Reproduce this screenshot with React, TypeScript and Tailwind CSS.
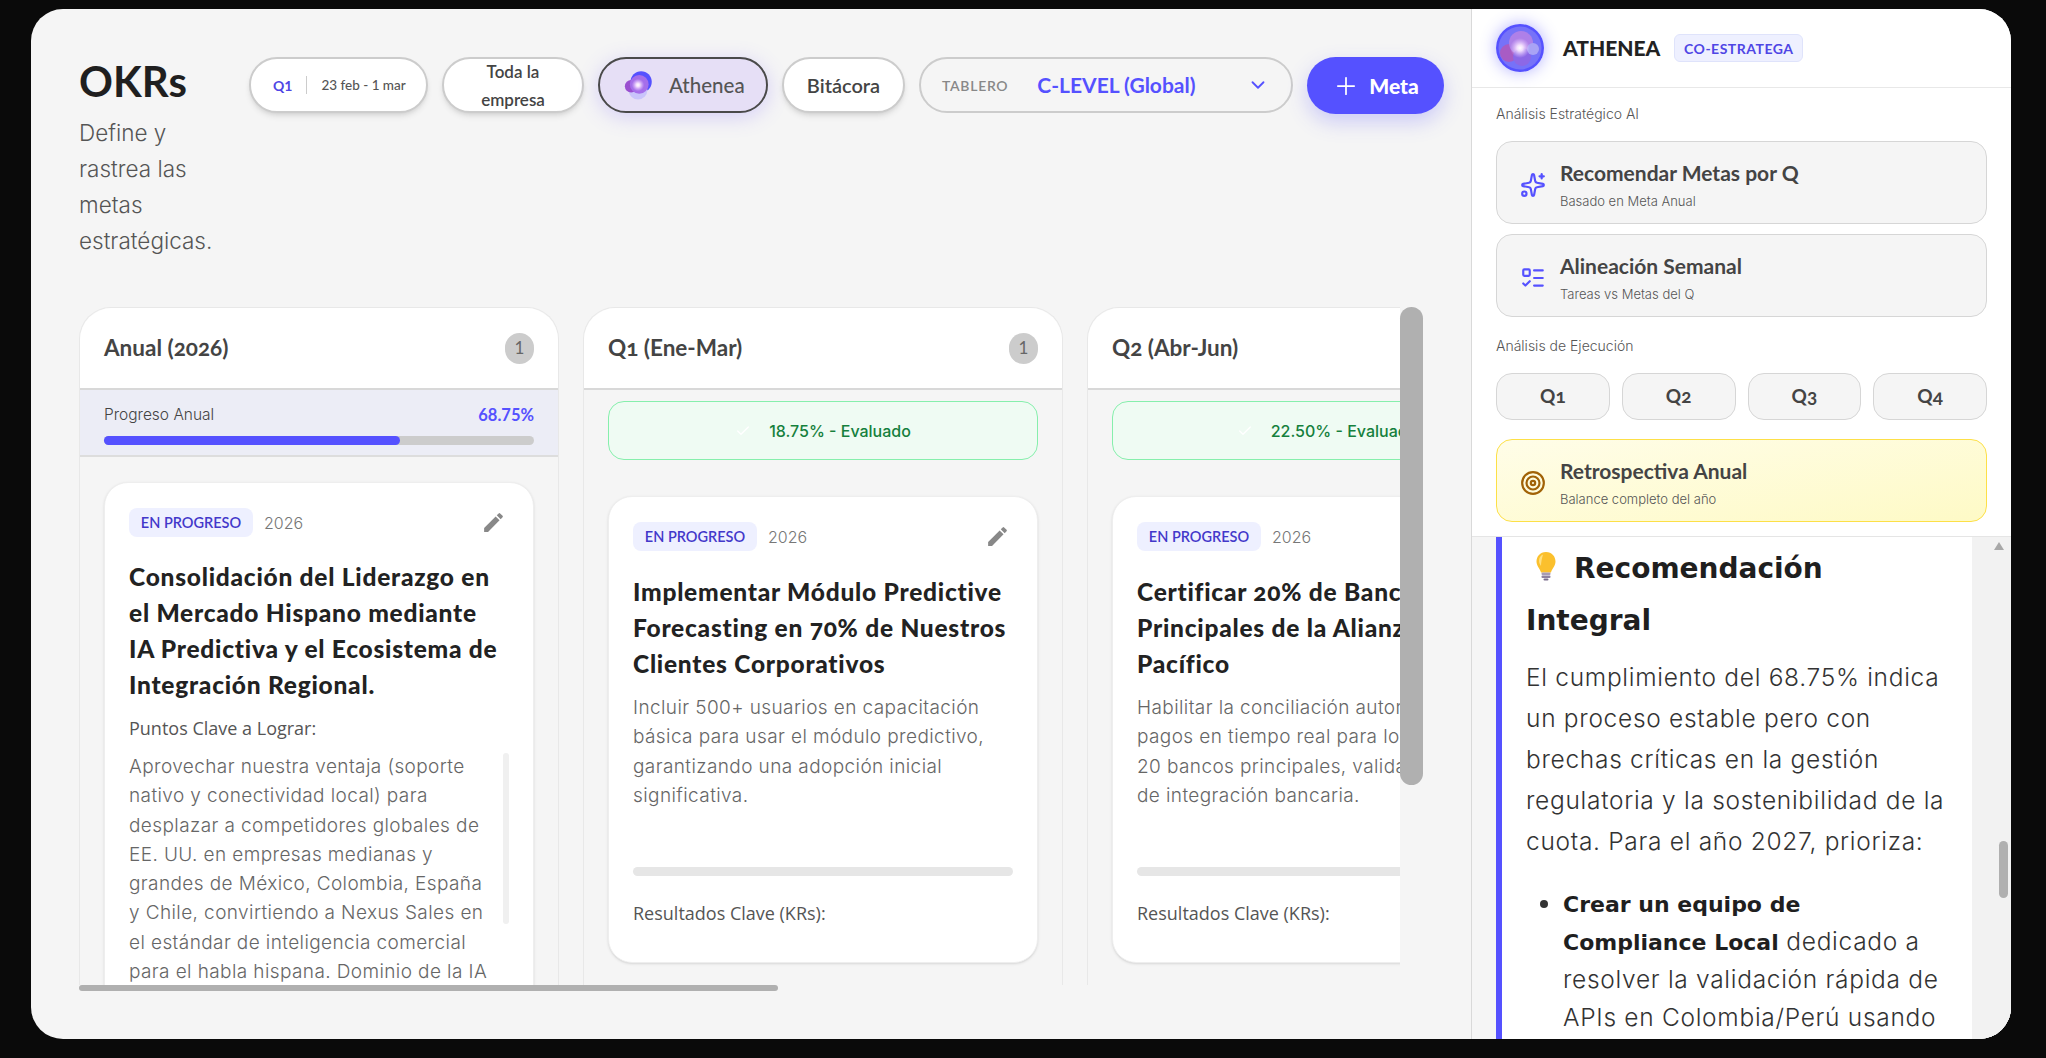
import { ChevronDown, Check, ListTodo, Plus, Sparkles, Target } from "lucide-react";
import { MdEdit } from "react-icons/md";
import type { ReactNode } from "react";

const heading = "font-['Lato'] font-bold";
const cardTitle = "font-['Lato'] font-black tracking-[0.75px]";
const body = "font-['Inter'] font-light";
const cardText = "font-['Inter'] font-light text-[19px] leading-[29.25px] tracking-[0.4px] text-[#666]";
const pillBase = "flex h-[56px] shrink-0 items-center rounded-full border-2";

const Orb = ({ id, ring }: { id: string; ring?: boolean }) => (
  <svg viewBox="0 0 48 48" className="h-full w-full">
    <defs>
      <radialGradient id={id + "-glow"}>
        <stop offset="0" stopColor="#ffffff" />
        <stop offset="0.3" stopColor="#fbeaff" stopOpacity="0.9" />
        <stop offset="1" stopColor="#e9c8ff" stopOpacity="0" />
      </radialGradient>
    </defs>
    {ring ? (
      <>
        <circle cx="24" cy="24" r="24" fill="#5551ff" />
        <circle cx="24" cy="24" r="21.500" fill="#7672f8" />
        <circle cx="13" cy="29" r="9" fill="#a85cc4" />
        <circle cx="25" cy="19" r="12" fill="#ae80e8" />
        <circle cx="26" cy="33" r="9" fill="#8c68e6" />
        <circle cx="37" cy="25" r="6" fill="#a9a3f5" />
      </>
    ) : (
      <>
        <circle cx="29" cy="19" r="17" fill="#5551ff" />
        <circle cx="24" cy="32" r="15" fill="#c9c4fb" />
        <circle cx="13" cy="26" r="10" fill="#9a4fd0" />
        <circle cx="26" cy="23" r="15" fill="#a56eea" />
      </>
    )}
    <circle cx="24" cy="24" r="10" fill={`url(#${id}-glow)`} />
  </svg>
);

const Column = ({ title, count, children }: { title: string; count?: string; children: ReactNode }) => (
  <div className="flex h-full w-[480px] shrink-0 flex-col rounded-t-[32px] border border-b-0 border-[#e8e8e8]">
    <div className="flex h-[82px] shrink-0 items-center justify-between rounded-t-[32px] border-b-2 border-[#d8d8d8] bg-white pl-6 pr-6">
      <h3 className={`${heading} text-[22.5px] text-[#444] [font-variant-numeric:oldstyle-nums]`}>{title}</h3>
      {count && (
        <span className="flex h-[31px] w-[29px] items-center justify-center rounded-full bg-[#cccccc] font-['Lato'] text-[17px] text-[#666]">{count}</span>
      )}
    </div>
    {children}
  </div>
);

const CardTop = () => (
  <div className="flex items-center">
    <span className="flex h-[29px] w-[124px] items-center justify-center rounded-lg bg-[#eef0ff] font-['Lato'] text-[14.5px] font-semibold text-[#4338ca]">EN PROGRESO</span>
    <span className={`${body} ml-[11px] text-[16px] text-[#777]`}>2026</span>
    <MdEdit size={25} className="ml-auto mr-[3px] text-[#888]" />
  </div>
);

const Evaluado = ({ text }: { text: string }) => (
  <div className="mx-6 mt-[11px] flex h-[59px] shrink-0 items-center justify-center gap-[18px] rounded-2xl border border-[#86efac] bg-[#effbf3]">
    <Check size={16} className="text-white" />
    <span className="font-['Inter'] text-[16px] font-medium text-[#15803d]">{text}</span>
  </div>
);

const QuarterCard = ({ title, desc }: { title: string[]; desc: string[] }) => (
  <div className="mx-6 mt-[36px] h-[467px] shrink-0 rounded-3xl border border-[#eeeeee] bg-white px-6 pt-[25px] shadow-sm">
    <CardTop />
    <h4 className={`${cardTitle} mt-[23px] text-[24.5px] leading-[36px] text-[#222] [font-variant-numeric:oldstyle-nums]`}>
      {title.map((l) => (
        <div key={l} className="whitespace-nowrap">{l}</div>
      ))}
    </h4>
    <div className={`${cardText} mt-[11px]`}>
      {desc.map((l) => (
        <div key={l} className="whitespace-nowrap">{l}</div>
      ))}
    </div>
    <div className="mt-[57px] h-[9px] rounded-full bg-[#e6e6e6]" />
    <p className="mt-[24px] font-['Open_Sans'] text-[18px] text-[#555]">Resultados Clave (KRs):</p>
  </div>
);

const ActionCard = ({ icon, title, sub, tone }: { icon: ReactNode; title: string; sub: string; tone?: string }) => (
  <button className={`flex h-[83px] w-full items-center rounded-2xl border pl-[23px] pt-[4px] text-left ${tone ?? "border-[#d6d6d6] bg-[#f5f5f5]"}`}>
    <span className="flex w-[26px] justify-center">{icon}</span>
    <span className="ml-[14px] block">
      <span className={`${heading} block text-[21px] leading-[28px] text-[#444]`}>{title}</span>
      <span className={`${body} mt-[4px] block text-[13px] leading-[20px] text-[#555]`}>{sub}</span>
    </span>
  </button>
);

const BulbIcon = () => (
  <svg viewBox="0 0 24 30" className="h-[30px] w-[24px]">
    <path d="M12 1C6 1 2.500 5.500 2.500 10.500c0 4.500 3.500 7 4.500 11h10c1-4 4.500-6.500 4.500-11C21.500 5.500 18 1 12 1z" fill="#fbc02d" />
    <path d="M9 3.500C6.500 4.500 5 7 5 10c0 2 1 3.500 2 5 0-4 1-8 2-11.500z" fill="#ffe082" />
    <rect x="7.500" y="21.500" width="9" height="2.500" rx="1" fill="#a79bb5" />
    <rect x="7.500" y="24.500" width="9" height="2.500" rx="1" fill="#8f82a0" />
    <rect x="9.500" y="27.500" width="5" height="2" rx="1" fill="#7a6d8c" />
  </svg>
);

export default function App() {
  return (
    <div className="h-screen w-screen overflow-hidden bg-[#0a0a0a] pl-[31px] pt-[9px]">
      <div className="flex h-[1030px] w-[1980px] overflow-hidden rounded-[32px] bg-[#f5f5f5]">
        {/* tablero */}
        <main className="w-[1440px] shrink-0 pl-[48px] pt-[48px]">
          <header className="flex h-[250px] items-start">
            <div className="w-[170px] shrink-0">
              <h1 className={`${heading} text-[42px] leading-[48px] text-[#1f1f1f]`}>OKRs</h1>
              <p className={`${body} mt-[10px] w-[150px] text-[22.5px] leading-[36px] text-[#555]`}>Define y rastrea las metas estratégicas.</p>
            </div>
            <div className="flex items-start gap-[14px]">
              <div className={`${pillBase} w-[179px] border-[#cccccc] bg-white pl-[22px] shadow-md`}>
                <span className="font-['Lato'] text-[14px] font-bold text-[#4f46e5]">Q1</span>
                <span className="mx-[14px] h-[18px] w-px bg-[#ccc]" />
                <span className="whitespace-nowrap font-['Lato'] text-[13.5px] font-medium text-[#555]">23 feb - 1 mar</span>
              </div>
              <div className={`${pillBase} w-[142px] justify-center border-[#cccccc] bg-white pt-[2px] text-center font-['Lato'] text-[17px] font-semibold leading-[28px] text-[#444] shadow-md`}>
                Toda la<br />empresa
              </div>
              <div className={`${pillBase} w-[170px] border-[#4a4a4a] bg-[#e6dff6] pl-[23px] shadow-[0_4px_20px_rgba(120,90,255,0.25)]`}>
                <span className="h-[30px] w-[30px]"><Orb id="orb-pill" /></span>
                <span className="ml-[16px] font-['Lato'] text-[20.5px] font-medium text-[#555]">Athenea</span>
              </div>
              <div className={`${pillBase} w-[123px] justify-center border-[#cccccc] bg-white font-['Lato'] text-[20px] font-semibold text-[#444] shadow-md`}>
                Bitácora
              </div>
              <div className={`${pillBase} w-[374px] border-[#cccccc] pl-[21px]`}>
                <span className="font-['Lato'] text-[14px] font-semibold tracking-wider text-[#888]">TABLERO</span>
                <span className={`${heading} ml-[29px] text-[21px] text-[#5551ff]`}>C-LEVEL (Global)</span>
                <ChevronDown size={22} className="ml-auto mr-[22px] text-[#5551ff]" />
              </div>
              <button className="flex h-[57px] w-[137px] shrink-0 items-center justify-center gap-[9px] rounded-full bg-[#5551ff] shadow-[0_8px_20px_rgba(85,81,255,0.25)]">
                <Plus size={28} strokeWidth={1.500} className="text-white" />
                <span className="font-['Lato'] text-[21px] font-black text-white">Meta</span>
              </button>
            </div>
          </header>

          <div className="relative h-[684px] w-[1344px]">
            <div className="flex h-[678px] w-[1321px] gap-6 overflow-hidden">
              <Column title="Anual (2026)" count="1">
                <div className="h-[67px] shrink-0 border-b-2 border-[#dddddd] bg-[#ecedf6] px-6 pt-[13px]">
                  <div className="flex items-center justify-between">
                    <span className={`${body} text-[15.5px] leading-[24px] text-[#444]`}>Progreso Anual</span>
                    <span className="font-['Lato'] text-[16.5px] font-bold leading-[24px] text-[#5551ff]">68.75%</span>
                  </div>
                  <div className="mt-[9px] h-[9px] rounded-full bg-[#cccccc]">
                    <div className="h-full rounded-full bg-[#5551ff]" style={{ width: "68.75%" }} />
                  </div>
                </div>
                <div className="relative mx-6 mt-[25px] h-[600px] shrink-0 rounded-3xl border border-[#eeeeee] bg-white px-6 pt-[25px] shadow-sm">
                  <CardTop />
                  <h4 className={`${cardTitle} mt-[22px] text-[24.5px] leading-[36px] text-[#222]`}>
                    <div className="whitespace-nowrap">Consolidación del Liderazgo en</div>
                    <div className="whitespace-nowrap">el Mercado Hispano mediante</div>
                    <div className="whitespace-nowrap">IA Predictiva y el Ecosistema de</div>
                    <div className="whitespace-nowrap">Integración Regional.</div>
                  </h4>
                  <p className="mt-[13px] font-['Open_Sans'] text-[18px] leading-[24px] text-[#555]">Puntos Clave a Lograr:</p>
                  <div className={`${cardText} mt-[12px]`}>
                    <div className="whitespace-nowrap">Aprovechar nuestra ventaja (soporte</div>
                    <div className="whitespace-nowrap">nativo y conectividad local) para</div>
                    <div className="whitespace-nowrap">desplazar a competidores globales de</div>
                    <div className="whitespace-nowrap">EE. UU. en empresas medianas y</div>
                    <div className="whitespace-nowrap">grandes de México, Colombia, España</div>
                    <div className="whitespace-nowrap">y Chile, convirtiendo a Nexus Sales en</div>
                    <div className="whitespace-nowrap">el estándar de inteligencia comercial</div>
                    <div className="whitespace-nowrap">para el habla hispana. Dominio de la IA</div>
                  </div>
                  <div className="absolute left-[398px] top-[270px] h-[171px] w-[6px] rounded-full bg-[#f0f0f0]" />
                </div>
              </Column>
              <Column title="Q1 (Ene-Mar)" count="1">
                <Evaluado text="18.75% - Evaluado" />
                <QuarterCard
                  title={["Implementar Módulo Predictive", "Forecasting en 70% de Nuestros", "Clientes Corporativos"]}
                  desc={["Incluir 500+ usuarios en capacitación", "básica para usar el módulo predictivo,", "garantizando una adopción inicial", "significativa."]}
                />
              </Column>
              <Column title="Q2 (Abr-Jun)">
                <Evaluado text="22.50% - Evaluado" />
                <QuarterCard
                  title={["Certificar 20% de Bancos", "Principales de la Alianza del", "Pacífico"]}
                  desc={["Habilitar la conciliación automática de", "pagos en tiempo real para los", "20 bancos principales, validando APIs", "de integración bancaria."]}
                />
              </Column>
            </div>
            {/* barras de scroll */}
            <div className="absolute left-[1321px] top-0 h-[478px] w-[23px] rounded-full bg-[#b0b0b0]" />
            <div className="absolute left-0 top-[678px] h-[6px] w-[699px] rounded-full bg-[#b0b0b0]" />
          </div>
        </main>

        {/* panel Athenea */}
        <aside className="flex w-[540px] shrink-0 flex-col border-l border-[#d9d9d9] bg-white">
          <div className="flex h-[79px] shrink-0 items-center border-b border-[#e8e8e8] pl-[24px]">
            <span className="h-[48px] w-[48px] rounded-full shadow-[0_0_16px_rgba(85,81,255,0.45)]"><Orb id="orb-main" ring /></span>
            <span className="ml-[19px] font-['Lato'] text-[21px] font-black text-[#222]">ATHENEA</span>
            <span className="ml-[14px] flex h-[28px] w-[129px] items-center justify-center rounded-md border border-[#dfe3fb] bg-[#eef0ff] font-['Lato'] text-[14px] font-bold tracking-[0.5px] text-[#4f46e5]">CO-ESTRATEGA</span>
          </div>
          <div className="h-[449px] shrink-0 border-b border-[#e5e5e5] px-[24px] pt-[15px]">
            <p className={`${body} text-[14px] leading-[22px] text-[#555]`}>Análisis Estratégico AI</p>
            <div className="mt-[16px] flex flex-col gap-[10px]">
              <ActionCard icon={<Sparkles size={26} strokeWidth={2} className="text-[#5551ff]" />} title="Recomendar Metas por Q" sub="Basado en Meta Anual" />
              <ActionCard icon={<ListTodo size={26} strokeWidth={2} className="text-[#5551ff]" />} title="Alineación Semanal" sub="Tareas vs Metas del Q" />
            </div>
            <p className={`${body} mt-[18px] text-[14px] leading-[22px] text-[#555]`}>Análisis de Ejecución</p>
            <div className="mt-[16px] grid grid-cols-4 gap-3">
              {["Q1", "Q2", "Q3", "Q4"].map((q) => (
                <button key={q} className={`${heading} h-[47px] rounded-2xl border border-[#d6d6d6] bg-[#f5f5f5] text-[19px] text-[#444] [font-variant-numeric:oldstyle-nums]`}>{q}</button>
              ))}
            </div>
            <div className="mt-[19px]">
              <ActionCard
                tone="border-[#fde047] bg-gradient-to-br from-[#fffde8] to-[#fefac6]"
                icon={<Target size={26} strokeWidth={2} className="text-[#a16207]" />}
                title="Retrospectiva Anual"
                sub="Balance completo del año"
              />
            </div>
          </div>
          <div className="relative flex-1 overflow-hidden bg-[#f5f5f5] pl-[24px]">
            <div className="h-full w-[476px] border-l-[6px] border-[#5551ff] bg-white pl-[24px] font-['Inter']">
              <h2 className="pt-[6px] font-['DejaVu_Sans'] text-[28px] font-bold leading-[52px] text-[#1f1f1f]">
                <span className="ml-[8px] mr-[16px] inline-block align-[-3px]"><BulbIcon /></span>Recomendación<br />Integral
              </h2>
              <p className="mt-[10px] text-[24.5px] font-light leading-[41px] tracking-[0.7px] text-[#333]">
                El cumplimiento del 68.75% indica<br />un proceso estable pero con<br />brechas críticas en la gestión<br />regulatoria y la sostenibilidad de la<br />cuota. Para el año 2027, prioriza:
              </p>
              <ul className="mt-[22px] list-disc pl-[37px] text-[24.5px] font-light leading-[38px] tracking-[0.7px] text-[#333]">
                <li>
                  <strong className="font-['DejaVu_Sans'] text-[22px] font-bold leading-[30px] tracking-normal text-[#1f1f1f]">Crear un equipo de<br />Compliance Local</strong> dedicado a<br />resolver la validación rápida de<br />APIs en Colombia/Perú usando
                </li>
              </ul>
            </div>
            <div className="absolute bottom-0 right-0 top-0 w-[39px] bg-[#f2f2f2]" />
            <div className="absolute right-[7px] top-[5px] h-0 w-0 border-x-[5px] border-b-[8px] border-x-transparent border-b-[#a8a8a8]" />
            <div className="absolute right-[3px] top-[304px] h-[57px] w-[9px] rounded-full bg-[#b0b0b0]" />
          </div>
        </aside>
      </div>
    </div>
  );
}
